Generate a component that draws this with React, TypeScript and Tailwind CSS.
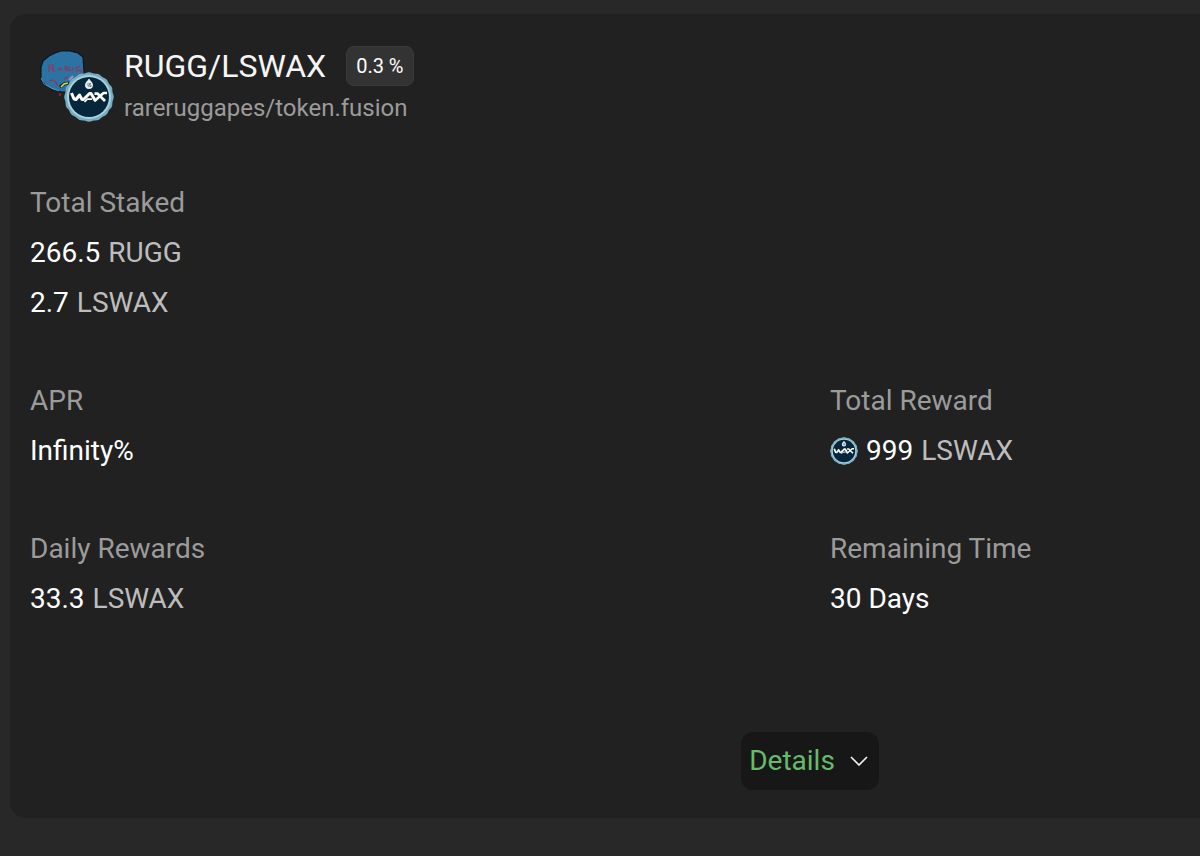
interface LogoProps {
  className: string
}

interface StatProps {
  label: string
  rows: { value: string; symbol?: string; icon?: boolean }[]
  className?: string
}

// Scalloped rim of the coin: 16 shallow bumps around the edge
const rimPoints = Array.from({ length: 96 }, (_, i) => {
  const angle = (i / 96) * Math.PI * 2
  const radius = 48.8 + Math.cos(angle * 16) * 0.8
  return `${(50 + radius * Math.cos(angle)).toFixed(2)},${(50 + radius * Math.sin(angle)).toFixed(2)}`
}).join(' ')

function WaxLogo({ className }: LogoProps) {
  return (
    <svg viewBox="0 0 100 100" className={className} aria-hidden="true">
      <polygon points={rimPoints} fill="#79abc1" />
      <circle cx="50" cy="50" r="44" fill="#a9d2e1" />
      <circle cx="50" cy="50" r="40" fill="#06263c" />
      <path d="M50 13c3 5 8 8 8 13a8 8 0 0 1-16 0c0-5 5-8 8-13z" fill="#e6eef1" />
      <path d="M48 22v6h3M54 23h-3v3h3v3h-3" fill="none" stroke="#3d5668" strokeWidth="1.4" />
      <g fill="none" stroke="#ffffff" strokeLinejoin="round">
        <path d="M15 42l5 12 4 1 7-9 5 9 3 0 12-12 3 0 9 15" strokeWidth="6" />
        <path d="M41 60l6-6h9" strokeWidth="3.5" />
        <path d="M61 43h6l15 15" strokeWidth="5.5" />
        <path d="M86 42h-7l-18 16" strokeWidth="5" />
      </g>
    </svg>
  )
}

function RuggLogo({ className }: LogoProps) {
  return (
    <svg viewBox="0 0 48 48" className={className} aria-hidden="true">
      <path
        d="M15 3l6-2 9 0 8 2 5 4 1 14 0 12-5 5-8 4-9 0-9-2-7-4-5-6 0-13 2-6 6-5z"
        fill="#2b73a3"
        stroke="#071624"
        strokeWidth="1.2"
        strokeLinejoin="round"
      />
      <path d="M1 28l3 6 7 4 8 3" fill="none" stroke="#8fb8d0" strokeWidth="0.6" />
      <g fill="none" stroke="#94355d" strokeWidth="1.2">
        <path d="M9 15h4v3H9zM9 18v4M12 19l3 3" />
        <path d="M18 20l2-2 2 3M24 16l3 1-2 2 3 2" />
        <path d="M30 17l-2 2 3 2M33 17l-1 4M40 16l-4 2 1 3 4-1v3" />
      </g>
      <path d="M9 31l4-1 3 2 2 4M24 29l4-2" fill="none" stroke="#a02f55" strokeWidth="1.2" />
      <path d="M20 37l4-3 5-1" fill="none" stroke="#171f1c" strokeWidth="3" />
      <path d="M21 37l3-3 4-1" fill="none" stroke="#d9df42" strokeWidth="1.6" />
      <path d="M29 30l4-4" fill="none" stroke="#9d93b9" strokeWidth="2" />
      <path d="M20 43v3" fill="none" stroke="#b01f39" strokeWidth="1.5" />
    </svg>
  )
}

function Stat({ label, rows, className = '' }: StatProps) {
  return (
    <div className={className}>
      <dt className="text-[#9b9b9b]">{label}</dt>
      {rows.map(row => (
        <dd key={row.value} className="flex items-center gap-2">
          {row.icon && <WaxLogo className="size-7" />}
          <span className="text-white">{row.value}</span>
          {row.symbol && <span className="text-[#bdbdbd]">{row.symbol}</span>}
        </dd>
      ))}
    </div>
  )
}

export default function App() {
  return (
    <main className="min-h-screen overflow-hidden bg-[#282828] pt-3.5 pb-9 font-['Roboto',sans-serif]">
      {/* The card is wider than the viewport and runs off its right edge */}
      <section className="ml-2.5 w-4/3 rounded-2xl bg-[#212121] px-5 pt-[31px] pb-7">
        {/* Header */}
        <header className="flex items-center gap-2.5 pl-2.5">
          <div className="relative size-[74px]">
            <RuggLogo className="size-12" />
            <WaxLogo className="absolute top-[22px] left-6 size-[50px]" />
          </div>
          <div>
            <div className="flex items-center gap-5">
              <h1 className="text-[32px] leading-[42px] text-[#f5f5f5]">RUGG/LSWAX</h1>
              <span className="rounded-lg border border-[#3a3a3a] bg-[#333333] px-[9px] text-xl leading-[38px] text-white">
                0.3 %
              </span>
            </div>
            <p className="text-2xl leading-[42px] text-[#9b9b9b]">rareruggapes/token.fusion</p>
          </div>
        </header>

        {/* Stats */}
        <dl className="mt-[49px] grid grid-cols-2 gap-x-10 gap-y-12 text-[28px] leading-[50px]">
          <Stat
            label="Total Staked"
            rows={[{ value: '266.5', symbol: 'RUGG' }, { value: '2.7', symbol: 'LSWAX' }]}
            className="col-span-2"
          />
          <Stat label="APR" rows={[{ value: 'Infinity%' }]} />
          <Stat label="Total Reward" rows={[{ value: '999', symbol: 'LSWAX', icon: true }]} />
          <Stat label="Daily Rewards" rows={[{ value: '33.3', symbol: 'LSWAX' }]} />
          <Stat label="Remaining Time" rows={[{ value: '30 Days' }]} />
        </dl>

        <div className="mt-[108px] flex justify-center">
          <button
            type="button"
            className="flex items-center gap-[15px] rounded-xl bg-[#171717] pr-[11px] pl-2 text-[28px] leading-[58px] text-[#66bb6a]"
          >
            Details
            <svg viewBox="0 0 18 10" className="h-2.5 w-[18px]" aria-hidden="true">
              <path d="M1 1l8 8 8-8" fill="none" stroke="#f5f5f5" strokeWidth="1.6" />
            </svg>
          </button>
        </div>
      </section>
    </main>
  )
}
